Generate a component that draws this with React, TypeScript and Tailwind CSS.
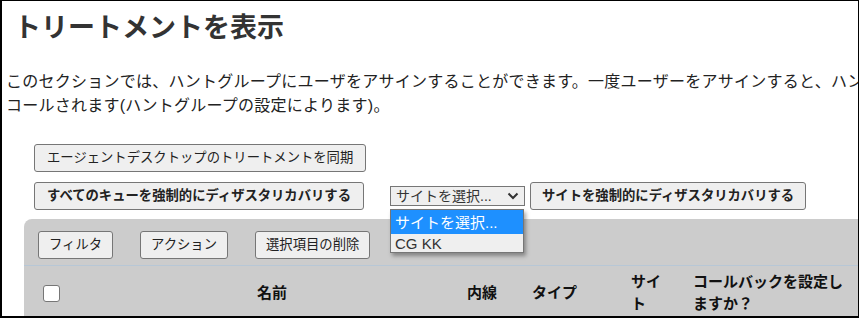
import type { ReactNode } from "react";

const FONT = { fontFamily: '"Liberation Sans", "Noto Sans CJK JP", sans-serif' };

function Btn({ children, bold = false, px = "px-[10px]" }: { children: ReactNode; bold?: boolean; px?: string }) {
  return (
    <button
      className={
        "h-[28px] rounded-[3px] border border-[#767676] bg-[#efefef] text-[13.33px] leading-none text-[#222] " +
        px +
        (bold ? " font-bold" : " font-normal")
      }
    >
      {children}
    </button>
  );
}

function SiteSelect() {
  return (
    <div className="relative">
      <div className="flex h-[20px] w-[135px] items-center justify-between border border-[#767676] bg-[#efefef] pl-[5px] pr-[5px] text-[14px] leading-none text-[#333]">
        <span>サイトを選択...</span>
        <svg width="12" height="8" viewBox="0 0 12 8" className="text-[#333]">
          <path d="M1.5 1.5 L6 6 L10.5 1.5" fill="none" stroke="currentColor" strokeWidth="2" />
        </svg>
      </div>
      <div className="absolute left-0 top-[23px] z-10 w-[134px] border border-[#767676] bg-[#efefef] shadow-[2px_3px_4px_rgba(0,0,0,0.35)]">
        <div className="flex h-[24px] items-center bg-[#1e90ff] px-[4px] text-[15px] leading-none text-white">
          サイトを選択...
        </div>
        <div className="flex h-[18px] items-center px-[4px] text-[15px] leading-none text-[#333]">
          CG KK
        </div>
      </div>
    </div>
  );
}

export default function App() {
  return (
    <div
      style={FONT}
      className="box-border h-[318px] w-[859px] overflow-hidden border-b-2 border-l-2 border-r border-t border-black bg-white"
    >
      <div className="w-[1000px]">
        <h1 className="ml-[12px] pt-[12px] text-[27px] font-bold leading-[31px] text-[#333]">
          トリートメントを表示
        </h1>
        <p className="ml-[4px] mt-[26px] text-[16px] leading-[24px] tracking-[0.25px] text-[#222]">
          <span className="whitespace-nowrap">
            このセクションでは、ハントグループにユーザをアサインすることができます。一度ユーザーをアサインすると、ハントグループのメンバーとして
          </span>
          <br />
          コールされます(ハントグループの設定によります)。
        </p>

        <div className="ml-[32px] mt-[26px] flex flex-col gap-[10px]">
          <div>
            <Btn px="px-[12px]">エージェントデスクトップのトリートメントを同期</Btn>
          </div>
          <div className="flex items-center">
            <Btn bold px="px-[12px]">すべてのキューを強制的にディザスタリカバリする</Btn>
            <div className="ml-[26px]">
              <SiteSelect />
            </div>
            <div className="ml-[5px]">
              <Btn bold px="px-[11px]">サイトを強制的にディザスタリカバリする</Btn>
            </div>
          </div>
        </div>

        <div className="ml-[22px] mt-[9px] rounded-tl-[8px] bg-[#cccccc]">
          <div className="flex gap-[27px] px-[14px] pb-[6px] pt-[12px]">
            <Btn>フィルタ</Btn>
            <Btn>アクション</Btn>
            <Btn>選択項目の削除</Btn>
          </div>
          <div className="h-px bg-[#b7c7d6]" />
          <div className="flex h-[54px] items-center text-[15px] font-bold leading-[22px] text-[#111]">
            <div className="w-[233px] pl-[19px]">
              <div className="h-[17px] w-[17px] rounded-[3px] border border-[#767676] bg-white" />
            </div>
            <div className="w-[210px]">名前</div>
            <div className="w-[65px]">内線</div>
            <div className="w-[99px]">タイプ</div>
            <div className="w-[62px] pr-[28px]">サイト</div>
            <div className="w-[156px]">コールバックを設定しますか？</div>
          </div>
        </div>
      </div>
    </div>
  );
}
